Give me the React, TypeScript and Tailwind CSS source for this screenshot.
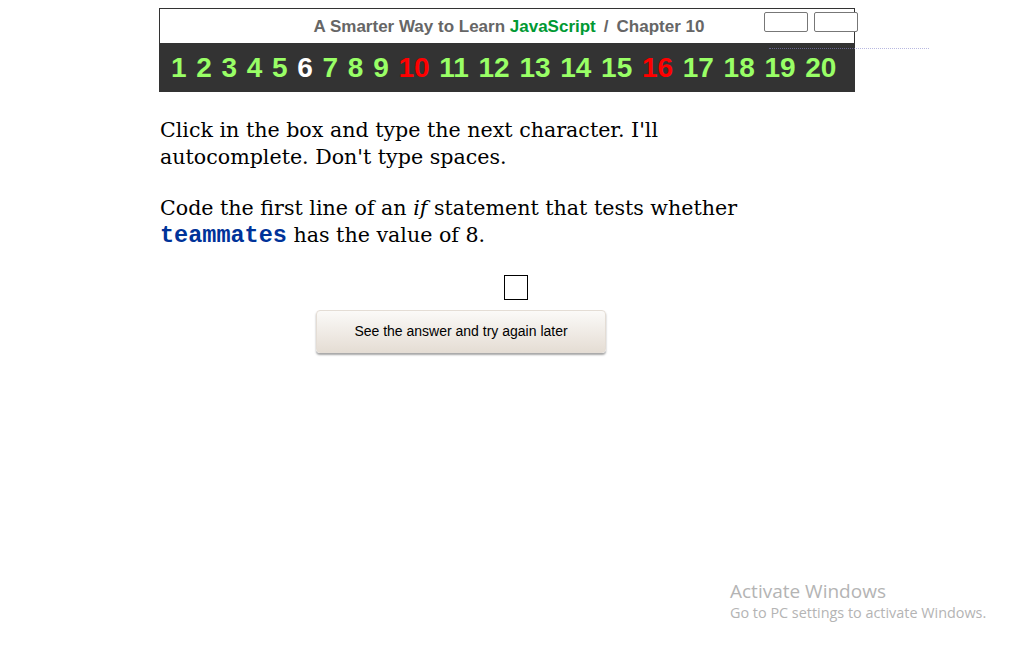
import React from "react";

const chapters = Array.from({ length: 20 }, (_, i) => i + 1);

function chapterColor(n: number) {
  if (n === 6) return "text-white";
  if (n === 10 || n === 16) return "text-[#ff0000]";
  return "text-[#99ff66]";
}

export default function App() {
  return (
    <div className="relative h-[657px] w-[1024px] overflow-hidden bg-white">
      {/* header */}
      <div className="ml-[159px] mt-[8px] w-[696px]">
        <div className="relative flex h-[35px] items-center justify-center border border-b-0 border-[#333] bg-white pl-[4px] pt-[2px] font-['Liberation_Sans',Arial,sans-serif] text-[17px] font-bold text-[#666]">
          <span>
            A Smarter Way to Learn <span className="text-[#009933]">JavaScript</span>
            <span className="mx-[8px]">/</span>Chapter 10
          </span>
          <div className="absolute left-[604px] top-[3px] flex gap-[6px]">
            <div className="h-[20px] w-[44px] rounded-[2px] border border-[#777] bg-white" />
            <div className="h-[20px] w-[44px] rounded-[2px] border border-[#777] bg-white" />
          </div>
        </div>
        <div className="relative flex h-[49px] items-center gap-[9.7px] bg-[#333] pl-[12px] pt-[1px] font-['Liberation_Sans',Arial,sans-serif] text-[28px] font-bold">
          {chapters.map((n) => (
            <span key={n} className={chapterColor(n)}>
              {n}
            </span>
          ))}
          <div className="absolute left-[610px] top-[5px] h-0 w-[160px] border-t border-dotted border-[#8888cc]/60" />
        </div>
      </div>

      {/* question */}
      <div className="ml-[160px] mt-[25px] w-[640px] font-['DejaVu_Serif',Georgia,serif] text-[20.6px] leading-[27px] text-black">
        <p>
          Click in the box and type the next character. I'll
          <br />
          autocomplete. Don't type spaces.
        </p>
        <p className="mt-[24px]">
          Code the first line of an <i>if</i> statement that tests whether
          <br />
          <span className="font-['Liberation_Mono',monospace] text-[23.5px] font-bold text-[#003399]">
            teammates
          </span>{" "}
          has the value of 8.
        </p>
      </div>

      <div className="ml-[504px] mt-[26px] h-[25px] w-[24px] border border-black bg-white" />

      <div className="ml-[316px] mt-[10px] flex h-[43px] w-[290px] items-center justify-center rounded-[4px] border border-[#e4ddd5] bg-gradient-to-b from-[#fbfaf8] to-[#e5ddd4] font-['Liberation_Sans',Arial,sans-serif] text-[14px] text-black shadow-[0_2px_2px_rgba(0,0,0,0.35)]">
        See the answer and try again later
      </div>

      {/* watermark */}
      <div className="absolute left-[730px] top-[579px] font-['Open_Sans',sans-serif] text-[#b4b4b4]">
        <div className="text-[19px] leading-[24px]">Activate Windows</div>
        <div className="text-[14.4px] leading-[20px]">Go to PC settings to activate Windows.</div>
      </div>
    </div>
  );
}
